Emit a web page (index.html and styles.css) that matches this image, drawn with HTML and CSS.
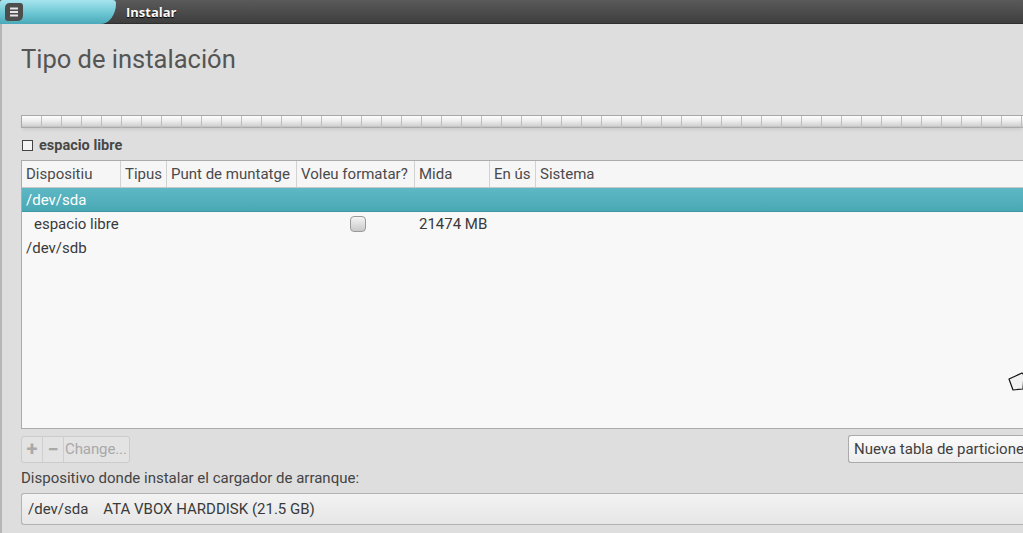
FILE: index.html
```html
<!DOCTYPE html>
<html>
<head>
<meta charset="utf-8">
<link rel="stylesheet" href="styles.css">
</head>
<body>
<div class="window">
  <div class="titlebar">
    <div class="tab">
      <svg class="menu-icon" width="20" height="20" viewBox="0 0 20 20">
        <path d="M6 1 H16 Q19 1 19 4 V13 Q19 19 13 19 H4 Q1 19 1 16 V6 Q1 1 6 1 Z" fill="#4d4d4d"/>
        <rect x="6" y="5.5" width="8" height="2" fill="#e6e6e6"/>
        <rect x="6" y="9" width="8" height="2" fill="#e6e6e6"/>
        <rect x="6" y="12.5" width="8" height="2" fill="#e6e6e6"/>
      </svg>
    </div>
    <div class="title">Instalar</div>
  </div>
  <div class="content">
    <h1 class="heading">Tipo de instalación</h1>
    <div class="diskbar"></div>
    <div class="legend"><span class="legend-box"></span><span class="legend-text">espacio libre</span></div>
    <div class="table">
      <div class="thead">
        <div class="th c1">Dispositiu</div>
        <div class="th c2">Tipus</div>
        <div class="th c3">Punt de muntatge</div>
        <div class="th c4">Voleu formatar?</div>
        <div class="th c5">Mida</div>
        <div class="th c6">En ús</div>
        <div class="th c7 last">Sistema</div>
      </div>
      <div class="row selected"><div class="cell c1">/dev/sda</div></div>
      <div class="row">
        <div class="cell c1 indent">espacio libre</div>
        <div class="cell c2"></div>
        <div class="cell c3"></div>
        <div class="cell c4 center"><span class="chk"></span></div>
        <div class="cell c5">21474 MB</div>
      </div>
      <div class="row"><div class="cell c1">/dev/sdb</div></div>
    </div>
    <div class="actions">
      <div class="btngroup">
        <span class="gbtn sym">+</span><span class="gbtn sym">−</span><span class="gbtn">Change...</span>
      </div>
      <div class="btn">Nueva tabla de particiones</div>
    </div>
    <div class="label">Dispositivo donde instalar el cargador de arranque:</div>
    <div class="combo"><span>/dev/sda</span><span class="combo-desc">ATA VBOX HARDDISK (21.5 GB)</span></div>
  </div>
  <svg class="cursor" width="18" height="20" viewBox="0 0 18 20">
    <path d="M2 7 L15 1 L17 3 L16 17 L6 18 Z" fill="#f2f2f2" stroke="#111" stroke-width="1.2" stroke-linejoin="round"/>
  </svg>
</div>
</body>
</html>
```
FILE: styles.css
```css
* { box-sizing: border-box; }
html, body { margin: 0; padding: 0; }
body {
  width: 1023px;
  height: 533px;
  overflow: hidden;
  background: #dedede;
  font-family: Roboto, "Liberation Sans", sans-serif;
  font-size: 15px;
  color: #3c3c3c;
}
.window { position: relative; width: 1023px; height: 533px; overflow: hidden; }
.titlebar {
  height: 24px;
  display: flex;
  align-items: center;
  background: linear-gradient(#5a5a5a, #3e3e3e);
  border-bottom: 1px solid #2e2e2e;
}
.tab {
  width: 116px;
  height: 24px;
  background: linear-gradient(#a6e4ee, #6cc6d3 55%, #4aa9b9);
  border-radius: 3px 4px 18px 0 / 3px 4px 24px 0;
  display: flex;
  align-items: center;
  padding-left: 4px;
}
.menu-icon { display: block; }
.title {
  margin-left: 10px;
  color: #fafafa;
  font-family: "Open Sans", "DejaVu Sans", sans-serif;
  font-weight: 700;
  font-size: 13px;
  text-shadow: 0 1px 1px #000;
}
.content {
  border-left: 2px solid #b6b6b6;
  height: 509px;
  padding: 0 0 0 19px;
}
.heading {
  margin: 0;
  padding-top: 18px;
  height: 91px;
  font-weight: 400;
  font-size: 25.5px;
  color: #555;
  line-height: 34px;
}
.diskbar {
  height: 13px;
  border-top: 1px solid #a8a8a8;
  border-left: 1px solid #a8a8a8;
  background:
    repeating-linear-gradient(90deg, transparent 0 19px, #bdbdbd 19px 20px),
    linear-gradient(#fdfdfd, #eeeeee 40%, #d0d0d0 85%, #9a9a9a);
  box-shadow: 0 3px 3px -1px rgba(0,0,0,0.08);
  margin-bottom: 9px;
}
.legend { display: flex; align-items: center; height: 17px; margin-bottom: 6px; }
.legend-box { width: 11px; height: 11px; border: 1px solid #444; background: #f4f4f4; margin: 0 6px 0 1px; }
.legend-text { font-weight: 700; color: #484848; font-size: 14.5px; }
.table {
  height: 269px;
  border: 1px solid #ababab;
  border-right: none;
  background: #f8f8f8;
}
.thead {
  display: flex;
  height: 27px;
  border-bottom: 1px solid #c9c9c9;
  background: #f6f6f6;
}
.th {
  line-height: 26px;
  padding-left: 4px;
  border-right: 1px solid #d2d2d2;
  white-space: nowrap;
  color: #4a4a4a;
}
.th.last { border-right: none; flex: 1; }
.c1 { width: 99px; }
.c2 { width: 46px; }
.c3 { width: 130px; }
.c4 { width: 118px; }
.c5 { width: 75px; }
.c6 { width: 46px; }
.row { display: flex; height: 24px; align-items: center; }
.cell { padding-left: 4px; white-space: nowrap; color: #3a3a3a; }
.cell.indent { padding-left: 12px; }
.cell.center { display: flex; justify-content: center; }
.row.selected {
  background: linear-gradient(#5db8c4, #4aa8b5);
  border-bottom: 1px solid #3f97a3;
}
.row.selected .cell { color: #fff; }
.chk {
  width: 16px; height: 16px;
  border: 1px solid #9a9a9a;
  border-radius: 4px;
  background: linear-gradient(#f4f4f4, #c9c9c9);
}
.actions {
  display: flex;
  justify-content: space-between;
  align-items: center;
  height: 41px;
  padding-top: 6px;
  padding-bottom: 7px;
}
.btngroup {
  display: flex;
  height: 27px;
  border: 1px solid #cbcbcb;
  border-radius: 3px;
  background: #e3e3e3;
}
.gbtn {
  line-height: 25px;
  color: #a9a9a9;
  padding: 0 2px 0 1px;
  border-right: 1px solid #cfcfcf;
  letter-spacing: -0.1px;
}
.gbtn:last-child { border-right: none; }
.gbtn.sym { width: 21px; text-align: center; padding: 0; font-size: 20px; font-weight: 700; line-height: 24px; }
.btn {
  height: 28px;
  line-height: 26px;
  border: 1px solid #aaaaaa;
  border-right: none;
  border-radius: 3px 0 0 3px;
  background: linear-gradient(#fbfbfb, #ededed);
  padding: 0 5px;
  width: 175px;
  white-space: nowrap;
  overflow: hidden;
  color: #404040;
}
.label { height: 23px; line-height: 16px; color: #444; }
.combo {
  height: 32px;
  border: 1px solid #b3b3b3;
  border-right: none;
  border-radius: 3px 0 0 3px;
  background: linear-gradient(#f3f3f3, #e6e6e6);
  display: flex;
  align-items: center;
  padding-left: 6px;
  color: #3a3a3a;
  gap: 15px;
}
.cursor { position: absolute; left: 1007px; top: 372px; }
```
